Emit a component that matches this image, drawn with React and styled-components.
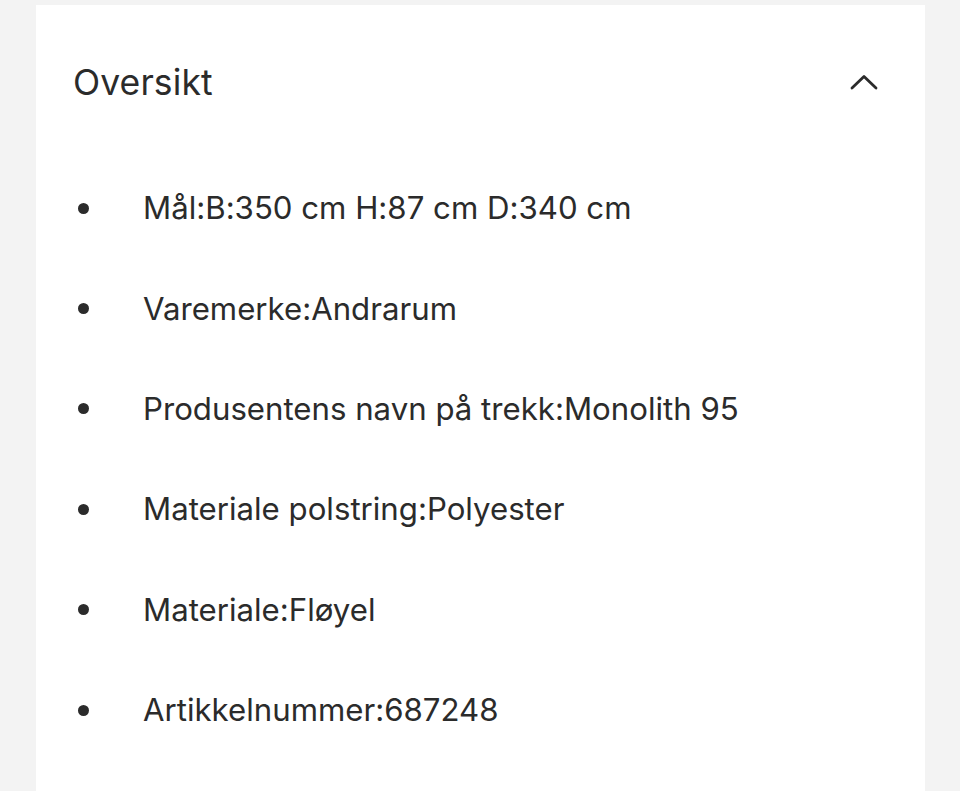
import React from "react";
import styled, { createGlobalStyle } from "styled-components";

const Global = createGlobalStyle`
  html, body { margin: 0; padding: 0; background: #f3f3f3; }
  body {
    font-family: Inter, "Open Sans", sans-serif;
    color: #2b2b2b;
    font-feature-settings: "calt" 0;
  }
`;

const Page = styled.div`
  padding: 5px 35px 0 36px;
  height: 791px;
  box-sizing: border-box;
  overflow: hidden;
`;

const Card = styled.section`
  background: #ffffff;
  height: 100%;
  padding: 0 45px 0 37px;
`;

const Header = styled.div`
  display: flex;
  align-items: center;
  justify-content: space-between;
  height: 154px;
`;

const Title = styled.h2`
  margin: 0;
  font-size: 35.5px;
  font-weight: 400;
  letter-spacing: 0.1px;
  color: #2b2b2b;
`;

const Toggle = styled.button`
  border: 0;
  background: none;
  padding: 0;
  width: 32px;
  height: 32px;
  display: flex;
  align-items: center;
  justify-content: center;
  color: #2b2b2b;
`;

const List = styled.ul`
  list-style: none;
  margin: 0;
  padding: 0;
  display: flex;
  flex-direction: column;
`;

const Item = styled.li`
  display: flex;
  align-items: center;
  height: 100.4px;
  font-size: 31.2px;
  letter-spacing: 0;
  &:first-child { margin-top: -1px; }
`;

const Bullet = styled.span`
  width: 11px;
  height: 11px;
  border-radius: 50%;
  background: #2b2b2b;
  margin-left: 5px;
  margin-right: 54px;
  flex: none;
`;

const items = [
  "Mål:B:350 cm H:87 cm D:340 cm",
  "Varemerke:Andrarum",
  "Produsentens navn på trekk:Monolith 95",
  "Materiale polstring:Polyester",
  "Materiale:Fløyel",
  "Artikkelnummer:687248",
];

export default function App() {
  return (
    <>
      <Global />
      <Page>
        <Card>
          <Header>
            <Title>Oversikt</Title>
            <Toggle aria-label="Skjul">
              <svg width="32" height="20" viewBox="0 0 32 20" fill="none">
                <path d="M4 16 L16 4.5 L28 16" stroke="#2b2b2b" strokeWidth="2.8" strokeLinecap="round" strokeLinejoin="round" />
              </svg>
            </Toggle>
          </Header>
          <List>
            {items.map((t) => (
              <Item key={t}>
                <Bullet />
                {t}
              </Item>
            ))}
          </List>
        </Card>
      </Page>
    </>
  );
}
